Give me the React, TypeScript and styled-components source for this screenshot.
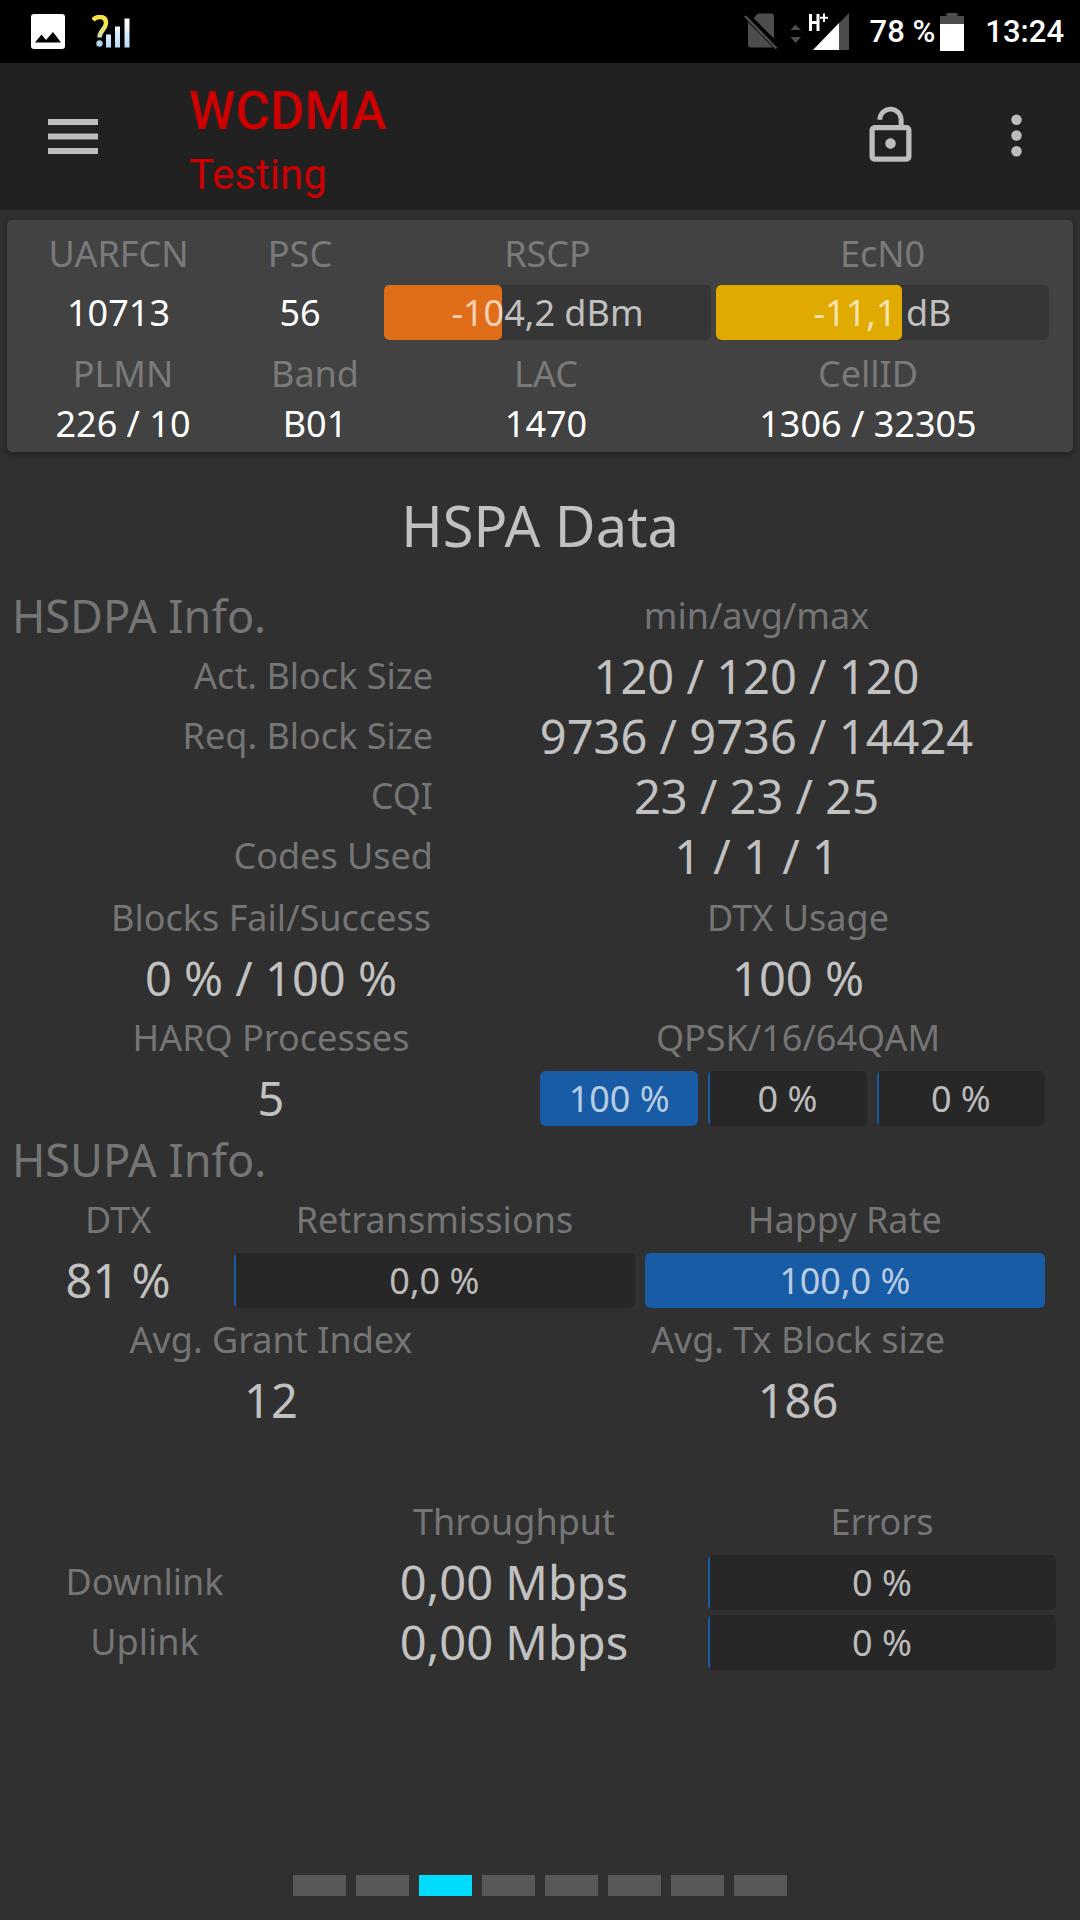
import React from "react";
import styled, { createGlobalStyle, css } from "styled-components";

const GlobalStyle = createGlobalStyle`
  *, *::before, *::after { box-sizing: border-box; }
  body { margin: 0; background: #303030; }
  h1, h2, p, dl, dt, dd { margin: 0; font-weight: 400; }
  button { border: 0; padding: 0; background: none; cursor: pointer; }
  svg { display: block; }
`;

const Page = styled.div`
  display: flex;
  flex-direction: column;
  min-height: 100vh;
  background: #303030;
  font-family: "Noto Sans", "Open Sans", sans-serif;
  font-size: 36px;
`;

const StatusBar = styled.div`
  display: flex;
  align-items: center;
  justify-content: space-between;
  height: 63px;
  padding: 0 16px 0 31px;
  background: #000;
  color: #fff;
  font: 500 31px/38px Roboto, sans-serif;
`;

const StatusGroup = styled.div<{ $gap: number }>`
  display: flex;
  align-items: center;
  gap: ${(p) => p.$gap}px;
`;

const Battery = styled.span`
  display: flex;
  align-items: center;
  gap: 5px;
`;

const AppBar = styled.header`
  display: flex;
  align-items: center;
  height: 147px;
  padding: 0 32px 2px 48px;
  background: #212121;
  font-family: Roboto, sans-serif;
`;

const IconButton = styled.button`
  display: flex;
  align-items: center;
  justify-content: center;
  min-width: 50px;
  height: 64px;
  color: #bdbdbd;
`;

const TitleBlock = styled.div`
  flex: 1;
  padding-top: 6px;
  margin-left: 91px;
  color: #cc0000;
`;

const AppTitle = styled.h1`
  font-size: 53px;
  line-height: 72px;
  && { font-weight: 500; }
`;

const AppSubtitle = styled.p`
  font-size: 42px;
  line-height: 56px;
`;

const Actions = styled.div`
  display: flex;
  gap: 63px;
`;

const Card = styled.section`
  margin: 10px 7px 0;
  padding: 5px 24px 6px 14px;
  border-radius: 5px;
  background: #424242;
  box-shadow: 0 2px 6px rgba(0, 0, 0, 0.4);
  color: #fff;
`;

const CardRow = styled.dl<{ $columns: string }>`
  display: grid;
  grid-template-columns: ${(p) => p.$columns};
  text-align: center;
`;

const CardLabel = styled.dt`
  height: 55px;
  line-height: 58px;
  color: #7a7a7a;
`;

const CardValue = styled.dd<{ $tall?: boolean }>`
  display: flex;
  align-items: center;
  justify-content: center;
  height: ${(p) => (p.$tall ? 65 : 46)}px;
`;

const Gauge = styled.div`
  position: relative;
  width: 100%;
  height: 55px;
  overflow: hidden;
  border-radius: 5px;
  background: rgba(0, 0, 0, 0.18);
  line-height: 56px;
  text-align: center;
`;

const GaugeFill = styled.div<{ $color: string }>`
  position: absolute;
  inset: 0 auto 0 0;
  min-width: 2px;
  border-radius: 5px;
  background: ${(p) => p.$color};
`;

const GaugeText = styled.span`
  position: relative;
  color: rgba(255, 255, 255, 0.7);
`;

const Main = styled.main`
  display: flex;
  flex-direction: column;
  gap: 2px;
  padding: 0 24px 0 2px;
  color: #c1c1c1;
`;

const ScreenTitle = styled.h2`
  padding: 35px 0 21px;
  margin-right: -22px;
  font-size: 56px;
  line-height: 76px;
  text-align: center;
`;

const rowText = css`
  height: 60px;
  line-height: 60px;
  padding: 0;
  font-weight: 400;
`;

const Table = styled.table<{ $columns: string; $bleed?: boolean }>`
  display: block;
  margin-right: ${(p) => (p.$bleed ? -24 : 0)}px;
  thead, tbody { display: block; }
  tr {
    display: grid;
    grid-template-columns: ${(p) => p.$columns};
  }
`;

const HeadCell = styled.th<{ $align?: string; $inset?: number }>`
  ${rowText}
  padding-right: ${(p) => p.$inset ?? 0}px;
  text-align: ${(p) => p.$align ?? "center"};
  color: #757575;
`;

const ValueCell = styled.td`
  ${rowText}
  display: flex;
  align-items: center;
  justify-content: center;
  font-size: 47px;
`;

const GaugeCell = styled(ValueCell)`
  font-size: 36px;
`;

const SectionTitle = styled.span`
  ${rowText}
  display: block;
  padding-left: 10px;
  text-align: left;
  font-size: 45px;
  color: #757575;
`;

const Pair = styled.dl<{ $columns: string; $end?: number; $gap?: number }>`
  display: grid;
  grid-template-columns: ${(p) => p.$columns};
  column-gap: ${(p) => p.$gap ?? 0}px;
  padding-right: ${(p) => p.$end ?? 0}px;
  text-align: center;
`;

const Label = styled.dt<{ $inset?: number }>`
  ${rowText}
  padding-left: ${(p) => p.$inset ?? 0}px;
  color: #757575;
`;

const Value = styled.dd<{ $gauges?: string; $inset?: number; $end?: number }>`
  ${rowText}
  padding-left: ${(p) => p.$inset ?? 0}px;
  padding-right: ${(p) => p.$end ?? 0}px;
  font-size: ${(p) => (p.$gauges ? 36 : 47)}px;
  ${(p) =>
    p.$gauges &&
    css`
      display: grid;
      grid-template-columns: ${p.$gauges};
      align-items: center;
      column-gap: 10px;
    `}
`;

const Group = styled.section<{ $spaced?: boolean }>`
  margin-top: ${(p) => (p.$spaced ? 60 : 0)}px;
`;

const Pager = styled.nav`
  display: flex;
  justify-content: center;
  gap: 10px;
  margin-top: auto;
  padding: 24px 0;
`;

const PageDot = styled.button<{ $active: boolean }>`
  width: 53px;
  height: 21px;
  background: ${(p) => (p.$active ? "#00dcff" : "#585858")};
`;

const BLUE = "#185ca5";

type MeterProps = { label: string; percent: number; text: string; color?: string };

function Meter({ label, percent, text, color = BLUE }: MeterProps) {
  return (
    <Gauge role="meter" aria-label={label} aria-valuenow={percent} aria-valuemin={0} aria-valuemax={100}>
      <GaugeFill $color={color} style={{ width: `${percent}%` }} />
      <GaugeText>{text}</GaugeText>
    </Gauge>
  );
}

const PictureIcon = () => (
  <svg width="34" height="35" viewBox="0 0 34 35" aria-hidden="true">
    <rect width="34" height="35" rx="3" fill="#fff" />
    <path d="M4 28.500 10.500 20.500 15 26 22 18 30 28.500Z" fill="#000" />
  </svg>
);

const UnknownSignalIcon = () => (
  <svg width="38" height="33" viewBox="0 0 38 33" aria-hidden="true">
    <defs>
      <linearGradient id="mark" x1="0" y1="0" x2="0" y2="33" gradientUnits="userSpaceOnUse">
        <stop offset="0" stopColor="#f6e43a" />
        <stop offset="0.35" stopColor="#f3e65a" />
        <stop offset="0.85" stopColor="#a9d3f0" />
      </linearGradient>
      <linearGradient id="bars" x1="0" y1="0" x2="0" y2="33" gradientUnits="userSpaceOnUse">
        <stop offset="0.2" stopColor="#fff" />
        <stop offset="1" stopColor="#b5d9fb" />
      </linearGradient>
    </defs>
    <path d="M1 5C3 2.500 6 2 8 2 12 2 14 4 14 8 14 14.500 7.500 15 7.500 22.500" fill="none" stroke="url(#mark)" strokeWidth="4.500" />
    <circle cx="7.500" cy="28.500" r="3.200" fill="url(#mark)" />
    <path d="M14 19.500h5v13h-5zM23 11.500h5v21h-5zM32.500 3.500h5v29h-5z" fill="url(#bars)" />
  </svg>
);

const NoSimIcon = () => (
  <svg width="34" height="37" viewBox="0 0 34 37" aria-hidden="true">
    <path d="M9.500 5 14 .500H27Q30 .500 30 3.500V25.500ZM4 9 29 34.500H7Q4 34.500 4 31.500Z" fill="#4d4d4d" />
    <path d="M1 3 32.500 35.500" stroke="#4d4d4d" strokeWidth="2.500" />
  </svg>
);

const MobileSignalIcon = () => (
  <svg width="59" height="38" viewBox="0 0 59 38" aria-hidden="true">
    <path d="M.500 17 5.500 11.500 11 17ZM.500 24H11L5.500 30Z" fill="#4d4d4d" />
    <path d="M59 0V37H23Z" fill="#4d4d4d" />
    <path d="M49 10V37H23Z" fill="#fff" />
    <path d="M20.500 1V18M28 1V18M20.500 9.500H28" stroke="#fff" strokeWidth="3" />
    <path d="M34 .500V9M30 4.800H38" stroke="#fff" strokeWidth="2" />
  </svg>
);

const BatteryIcon = () => (
  <svg width="24" height="38" viewBox="0 0 24 38" aria-hidden="true">
    <path d="M0 12V3H6.500V0H17.500V3H24V12Z" fill="#4d4d4d" />
    <path d="M0 11H24V38H0Z" fill="#fff" />
  </svg>
);

const MenuIcon = () => (
  <svg width="50" height="36" viewBox="0 0 50 36" fill="currentColor" aria-hidden="true">
    <path d="M0 1H50V7H0ZM0 15.500H50V21.500H0ZM0 30H50V36H0Z" />
  </svg>
);

const UnlockIcon = () => (
  <svg width="63" height="63" viewBox="0 0 24 24" fill="currentColor" aria-hidden="true">
    <path d="M12 17c1.100 0 2-.9 2-2s-.9-2-2-2-2 .9-2 2 .9 2 2 2zm6-9h-1V6c0-2.760-2.240-5-5-5S7 3.240 7 6h1.900c0-1.710 1.390-3.100 3.100-3.100 1.710 0 3.100 1.390 3.100 3.100v2H6c-1.100 0-2 .9-2 2v10c0 1.100.9 2 2 2h12c1.100 0 2-.9 2-2V10c0-1.100-.9-2-2-2zm0 12H6V10h12v10z" />
  </svg>
);

const MoreIcon = () => (
  <svg width="63" height="63" viewBox="0 0 24 24" fill="currentColor" aria-hidden="true">
    <circle cx="12" cy="6" r="2" />
    <circle cx="12" cy="12" r="2" />
    <circle cx="12" cy="18" r="2" />
  </svg>
);

const blockRows = [
  ["Act. Block Size", "120 / 120 / 120"],
  ["Req. Block Size", "9736 / 9736 / 14424"],
  ["CQI", "23 / 23 / 25"],
  ["Codes Used", "1 / 1 / 1"],
];

const HALVES = "538fr 516fr";

export default function App() {
  const [page, setPage] = React.useState(2);
  return (
    <Page>
      <GlobalStyle />
      <StatusBar>
        <StatusGroup $gap={27}>
          <PictureIcon />
          <UnknownSignalIcon />
        </StatusGroup>
        <StatusGroup $gap={21}>
          <StatusGroup $gap={12}>
            <NoSimIcon />
            <MobileSignalIcon />
          </StatusGroup>
          <Battery>
            <span>78 %</span>
            <BatteryIcon />
          </Battery>
          <span>13:24</span>
        </StatusGroup>
      </StatusBar>

      <AppBar>
        <IconButton type="button" aria-label="Menu">
          <MenuIcon />
        </IconButton>
        <TitleBlock>
          <AppTitle>WCDMA</AppTitle>
          <AppSubtitle>Testing</AppSubtitle>
        </TitleBlock>
        <Actions>
          <IconButton type="button" aria-label="Unlock">
            <UnlockIcon />
          </IconButton>
          <IconButton type="button" aria-label="More options">
            <MoreIcon />
          </IconButton>
        </Actions>
      </AppBar>

      <Card>
        <CardRow $columns="195fr 168fr 327fr 5fr 333fr">
          <div>
            <CardLabel>UARFCN</CardLabel>
            <CardValue $tall>10713</CardValue>
          </div>
          <div>
            <CardLabel>PSC</CardLabel>
            <CardValue $tall>56</CardValue>
          </div>
          <div>
            <CardLabel>RSCP</CardLabel>
            <CardValue $tall>
              <Meter label="RSCP" percent={36} text="-104,2 dBm" color="#e06e18" />
            </CardValue>
          </div>
          <div />
          <div>
            <CardLabel>EcN0</CardLabel>
            <CardValue $tall>
              <Meter label="EcN0" percent={56} text="-11,1 dB" color="#e0aa00" />
            </CardValue>
          </div>
        </CardRow>
        <CardRow $columns="204fr 180fr 282fr 362fr">
          <div>
            <CardLabel>PLMN</CardLabel>
            <CardValue>226 / 10</CardValue>
          </div>
          <div>
            <CardLabel>Band</CardLabel>
            <CardValue>B01</CardValue>
          </div>
          <div>
            <CardLabel>LAC</CardLabel>
            <CardValue>1470</CardValue>
          </div>
          <div>
            <CardLabel>CellID</CardLabel>
            <CardValue>1306 / 32305</CardValue>
          </div>
        </CardRow>
      </Card>

      <Main>
        <ScreenTitle>HSPA Data</ScreenTitle>

        <Table $columns="431fr 647fr" $bleed>
          <thead>
            <tr>
              <HeadCell scope="col">
                <SectionTitle>HSDPA Info.</SectionTitle>
              </HeadCell>
              <HeadCell scope="col">min/avg/max</HeadCell>
            </tr>
          </thead>
          <tbody>
            {blockRows.map(([name, value]) => (
              <tr key={name}>
                <HeadCell scope="row" $align="right">{name}</HeadCell>
                <ValueCell>{value}</ValueCell>
              </tr>
            ))}
          </tbody>
        </Table>

        <Group>
          <Pair $columns={HALVES}>
            <div>
              <Label>Blocks Fail/Success</Label>
              <Value>0 % / 100 %</Value>
            </div>
            <div>
              <Label>DTX Usage</Label>
              <Value>100 %</Value>
            </div>
          </Pair>
          <Pair $columns={HALVES}>
            <div>
              <Label>HARQ Processes</Label>
              <Value>5</Value>
            </div>
            <div>
              <Label>QPSK/16/64QAM</Label>
              <Value $gauges="158fr 158fr 168fr" $end={11}>
                <Meter label="QPSK" percent={100} text="100 %" />
                <Meter label="16QAM" percent={0} text="0 %" />
                <Meter label="64QAM" percent={0} text="0 %" />
              </Value>
            </div>
          </Pair>
        </Group>

        <Group>
          <SectionTitle>HSUPA Info.</SectionTitle>
          <Pair $columns="222fr 400fr 400fr" $gap={10} $end={11}>
            <div>
              <Label $inset={10}>DTX</Label>
              <Value $inset={10}>81 %</Value>
            </div>
            <div>
              <Label>Retransmissions</Label>
              <Value $gauges="1fr">
                <Meter label="Retransmissions" percent={0} text="0,0 %" />
              </Value>
            </div>
            <div>
              <Label>Happy Rate</Label>
              <Value $gauges="1fr">
                <Meter label="Happy Rate" percent={100} text="100,0 %" />
              </Value>
            </div>
          </Pair>
          <Pair $columns={HALVES}>
            <div>
              <Label>Avg. Grant Index</Label>
              <Value>12</Value>
            </div>
            <div>
              <Label>Avg. Tx Block size</Label>
              <Value>186</Value>
            </div>
          </Pair>
        </Group>

        <Group $spaced>
          <Table $columns="318fr 388fr 348fr">
            <thead>
              <tr>
                <td />
                <HeadCell scope="col">Throughput</HeadCell>
                <HeadCell scope="col">Errors</HeadCell>
              </tr>
            </thead>
            <tbody>
              {["Downlink", "Uplink"].map((name) => (
                <tr key={name}>
                  <HeadCell scope="row" $inset={33}>{name}</HeadCell>
                  <ValueCell>0,00 Mbps</ValueCell>
                  <GaugeCell>
                    <Meter label={`${name} errors`} percent={0} text="0 %" />
                  </GaugeCell>
                </tr>
              ))}
            </tbody>
          </Table>
        </Group>
      </Main>

      <Pager aria-label="Pages">
        {Array.from({ length: 8 }, (_, i) => (
          <PageDot key={i} type="button" aria-label={`Page ${i + 1}`} $active={i === page} onClick={() => setPage(i)} />
        ))}
      </Pager>
    </Page>
  );
}
